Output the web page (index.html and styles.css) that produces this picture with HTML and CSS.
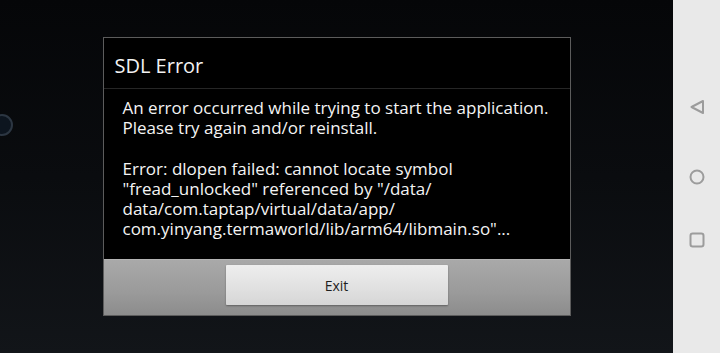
FILE: index.html
```html
<!DOCTYPE html>
<html>
<head>
<meta charset="utf-8">
<link rel="stylesheet" href="styles.css">
</head>
<body>
<div class="screen">
  <main class="stage">
    <span class="ghost-circle"></span>
    <section class="dialog">
      <h1 class="dialog-title">SDL Error</h1>
      <div class="dialog-body">
        <p>An error occurred while trying to start the application.<br>Please try again and/or reinstall.</p>
        <p>Error: dlopen failed: cannot locate symbol<br>"fread_unlocked" referenced by "/data/<br>data/com.taptap/virtual/data/app/<br>com.yinyang.termaworld/lib/arm64/libmain.so"...</p>
      </div>
      <div class="dialog-actions">
        <button class="btn">Exit</button>
      </div>
    </section>
  </main>
  <nav class="navbar">
    <svg class="nav-icon nav-back" width="16" height="16" viewBox="0 0 16 16"><path d="M14 2 L2.5 8 L14 14 Z" fill="none" stroke="#9c9c9c" stroke-width="2" stroke-linejoin="round"/></svg>
    <svg class="nav-icon nav-home" width="16" height="16" viewBox="0 0 16 16"><circle cx="8" cy="8" r="6.5" fill="none" stroke="#9c9c9c" stroke-width="2"/></svg>
    <svg class="nav-icon nav-recent" width="16" height="16" viewBox="0 0 16 16"><rect x="1.5" y="1.5" width="13" height="13" rx="2.2" fill="none" stroke="#9c9c9c" stroke-width="2"/></svg>
  </nav>
</div>
</body>
</html>
```
FILE: styles.css
```css
* { box-sizing: border-box; }
html, body { margin: 0; padding: 0; }
body {
  width: 720px;
  height: 353px;
  overflow: hidden;
  font-family: "Open Sans", "Noto Sans", sans-serif;
}
.screen {
  display: flex;
  width: 720px;
  height: 353px;
}
.stage {
  position: relative;
  flex: 1;
  display: flex;
  align-items: center;
  justify-content: center;
  background: linear-gradient(180deg, #050608 0%, #0a0c0f 50%, #121519 100%);
}
.ghost-circle {
  position: absolute;
  left: -9px;
  top: 114px;
  width: 22px;
  height: 22px;
  border-radius: 50%;
  border: 2px solid #2c3642;
  background: #0d151f;
}
.dialog {
  width: 468px;
  height: 279px;
  border: 1px solid #5c5c5c;
  background: #000;
  display: flex;
  flex-direction: column;
}
.dialog-title {
  margin: 0;
  height: 51px;
  flex: none;
  padding: 13px 0 0 11px;
  font-size: 20px;
  font-weight: 400;
  line-height: 30px;
  color: #f2f2f2;
  border-bottom: 1px solid #262626;
}
.dialog-body {
  flex: 1;
  padding: 9px 6px 0 19px;
  color: #f4f4f4;
  font-size: 17px;
  line-height: 20.2px;
}
.dialog-body p { margin: 0 0 20.2px 0; }
.dialog-body p:last-child { margin: 0; }
.dialog-actions {
  height: 56px;
  flex: none;
  display: flex;
  justify-content: center;
  padding-top: 5px;
  background: linear-gradient(180deg, #a9a9a9 0%, #9a9a9a 60%, #8c8c8c 100%);
  border-top: 1px solid #b4b4b4;
}
.btn {
  width: 222px;
  height: 40px;
  border: none;
  border-radius: 1px;
  background: linear-gradient(180deg, #eeeeee 0%, #e0e0e0 60%, #d6d6d6 100%);
  box-shadow: 0 1px 2px rgba(0,0,0,0.35);
  font-family: "Open Sans", "Noto Sans", sans-serif;
  font-size: 14px;
  color: #1e1e1e;
  padding: 0;
}
.navbar {
  width: 47px;
  background: #e9e9e9;
  display: flex;
  flex-direction: column;
  align-items: center;
  padding-top: 99px;
}
.nav-icon { display: block; }
.nav-home { margin-top: 54px; }
.nav-recent { margin-top: 47px; }
```
